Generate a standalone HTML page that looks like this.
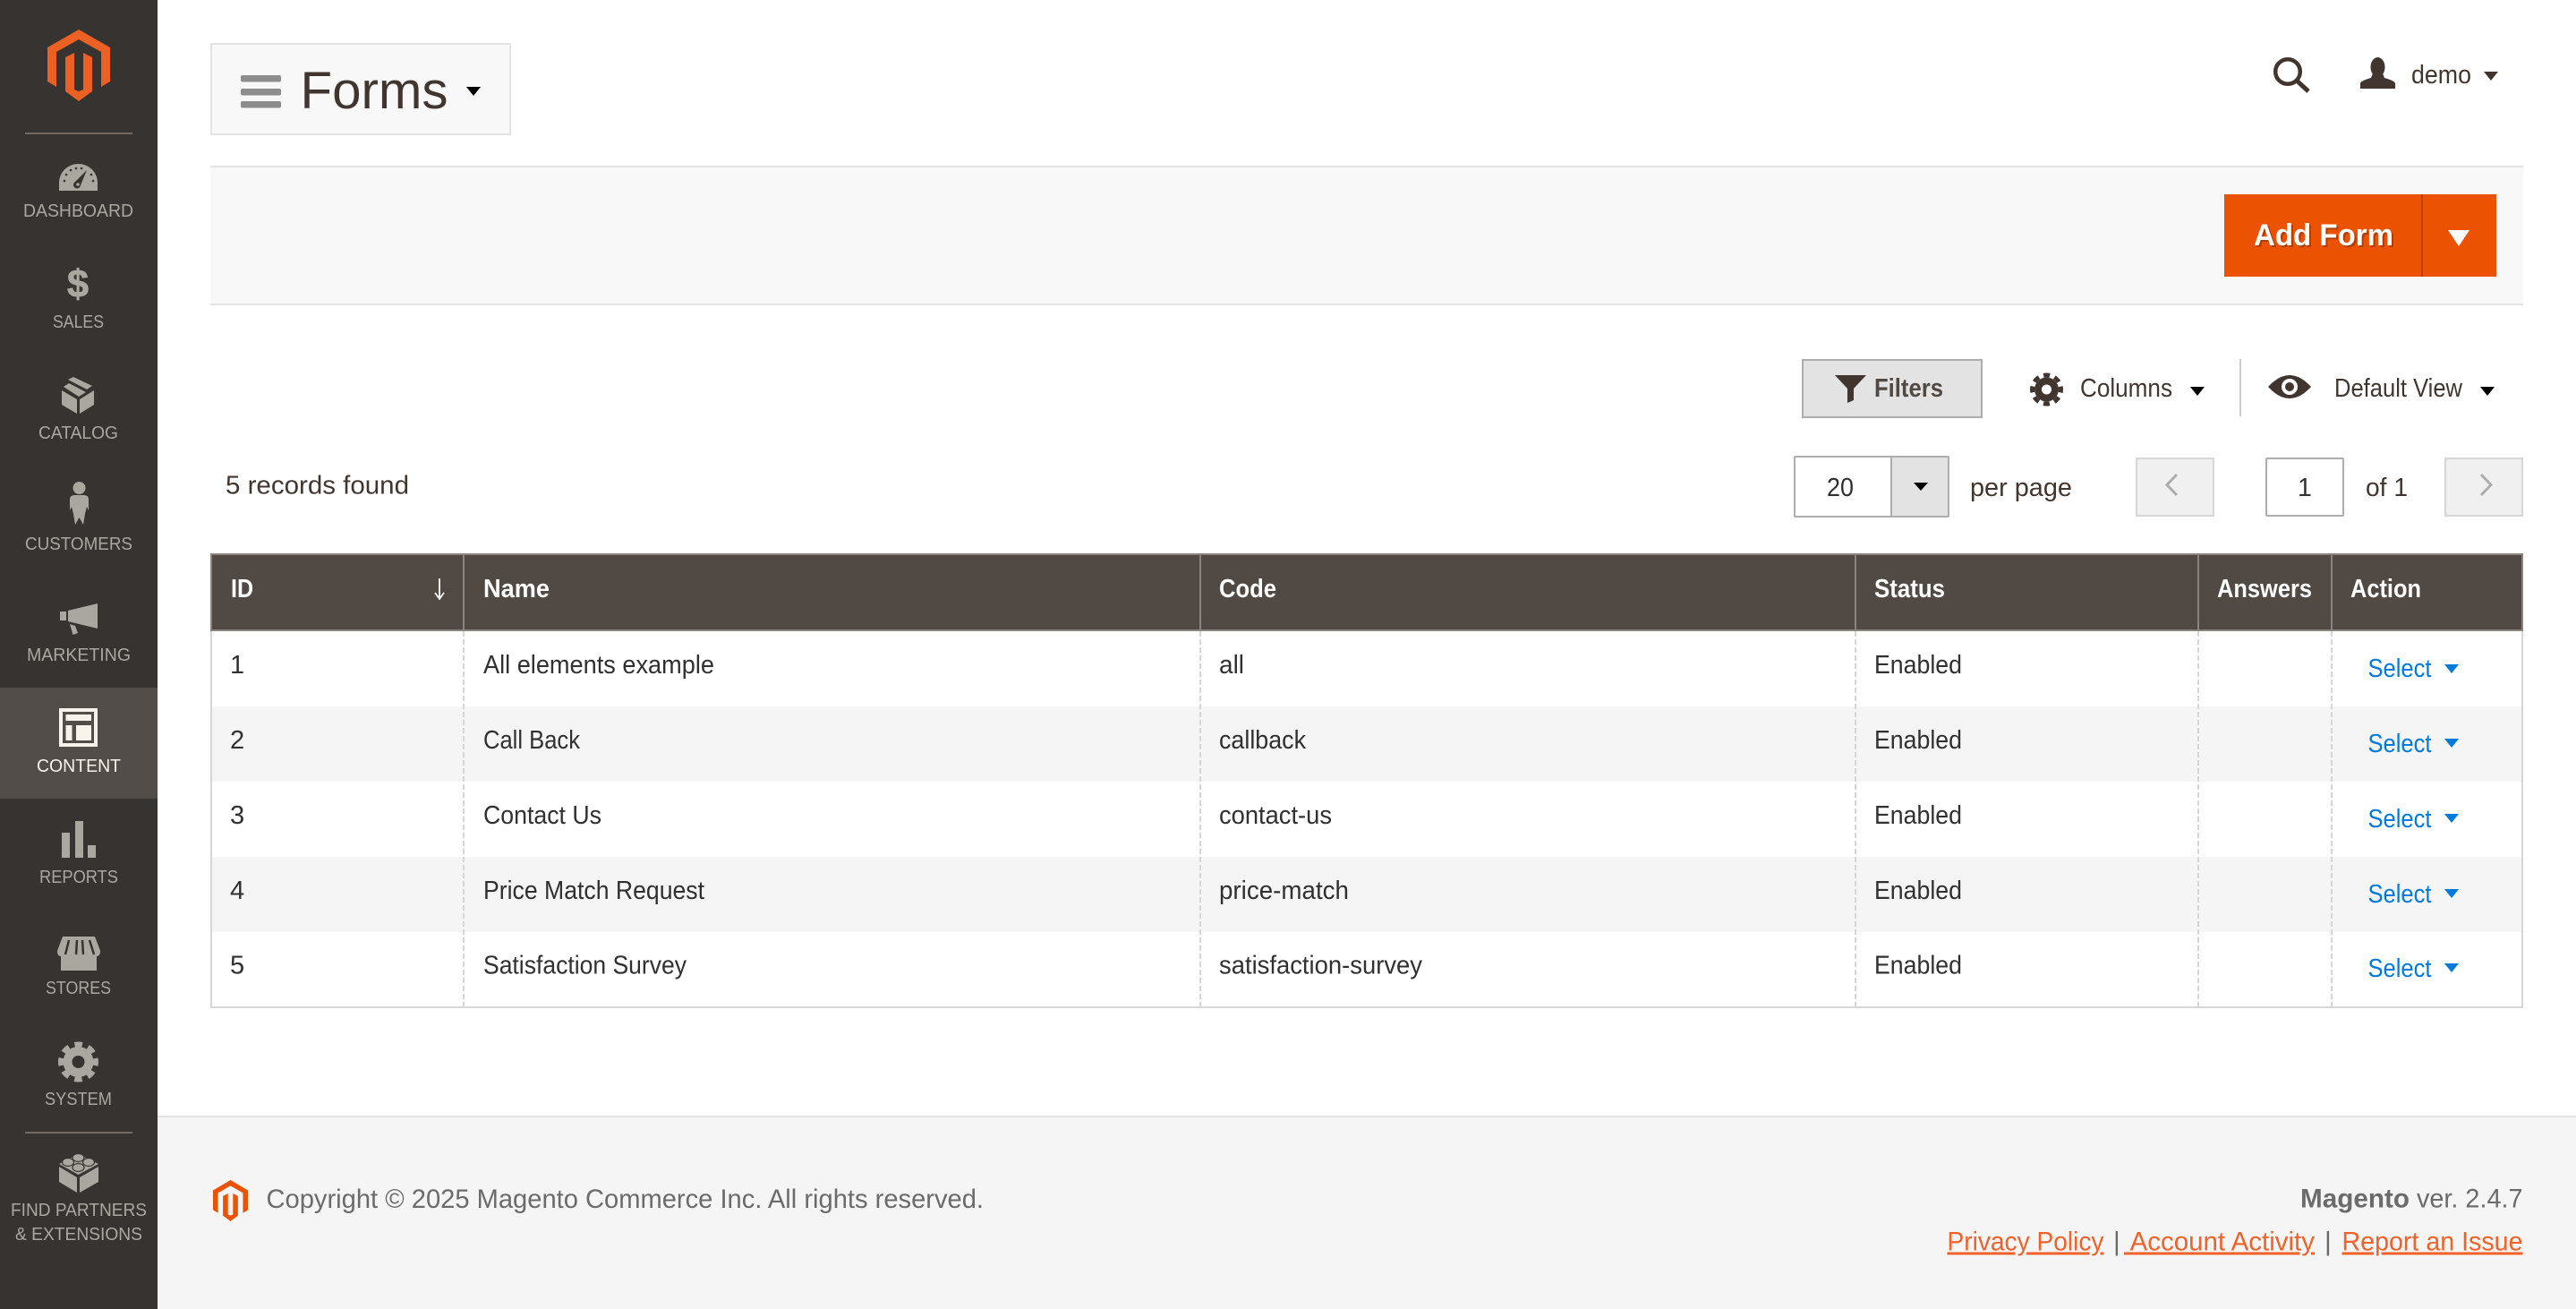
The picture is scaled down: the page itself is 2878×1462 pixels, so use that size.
<!DOCTYPE html>
<html lang="en">
<head>
<meta charset="utf-8">
<title>Forms</title>
<style>
html,body{margin:0;padding:0;background:#fff;width:2878px;height:1462px;overflow:hidden}
svg{display:block}
text{font-family:"Liberation Sans",sans-serif;white-space:pre}
.n{font-size:20.5px;fill:#aaa6a0}
.t{font-size:29px;fill:#303030}
.h{font-size:28.5px;fill:#fff;font-weight:bold}
.d{font-size:29px;fill:#41362f}
.s{font-size:29px;fill:#007bdb}
.f{font-size:30px;fill:#6b6b6b}
.l{font-size:30px;fill:#f1622a;text-decoration:underline}
</style>
</head>
<body>
<svg xmlns="http://www.w3.org/2000/svg" width="2878" height="1462" viewBox="0 0 2878 1462">
<!-- Sidebar -->
<rect x="0" y="0" width="176" height="1462" fill="#373330"/>
<rect x="0" y="768" width="176" height="124" fill="#524d49"/>
<path fill="#ec6024" d="M88 33L123 53V91L113 97V58L88 44L63 58V97L53 91V53ZM73 64L83 59V100L88 102L93 100V59L103 64V102L88 113L73 102Z"/>
<rect x="28" y="148" width="120" height="2" fill="#736963"/>
<rect x="28" y="1264" width="120" height="2" fill="#736963"/>

<path fill="#aaa6a0" d="M66 213V204A21.5 21 0 0 1 109 204V213Z"/>
<path fill="#373330" d="M97 190L90 207A4 4 0 1 1 84 203Z"/>
<circle cx="87" cy="206" r="1.8" fill="#aaa6a0"/>
<g fill="#373330"><circle cx="72" cy="202" r="1.3"/><circle cx="74" cy="195" r="1.3"/><circle cx="79" cy="190" r="1.3"/><circle cx="85" cy="188" r="1.3"/><circle cx="91" cy="188" r="1.3"/><circle cx="102" cy="195" r="1.3"/><circle cx="104" cy="202" r="1.3"/></g>
<text class="n" x="26" y="242" textLength="123" lengthAdjust="spacingAndGlyphs">DASHBOARD</text>

<text x="75" y="332" font-size="44" font-weight="bold" fill="#aaa6a0" stroke="#aaa6a0" stroke-width="0.8" textLength="24" lengthAdjust="spacingAndGlyphs">$</text>
<text class="n" x="59" y="366" textLength="57" lengthAdjust="spacingAndGlyphs">SALES</text>

<path fill="#aaa6a0" d="M69 436L86 446V462L69 452ZM89 446L105 436V452L89 462ZM82 421L103 431L97 435L76 424ZM71 432L77 428L96 438L88 443Z"/>
<text class="n" x="43" y="490" textLength="89" lengthAdjust="spacingAndGlyphs">CATALOG</text>

<circle cx="88.5" cy="545" r="7" fill="#aaa6a0"/>
<path fill="#aaa6a0" d="M83 553H94Q99 553 99 558V570L97 566L95 574L93 586L88.5 578L84 586L82 574L80 566L78 570V558Q78 553 83 553Z"/>
<text class="n" x="28" y="614" textLength="120" lengthAdjust="spacingAndGlyphs">CUSTOMERS</text>

<path fill="#aaa6a0" d="M67 683H74V693H67ZM76 682L109 674V702L76 694ZM78 697L84 699L87 707L81.5 709Z"/>
<text class="n" x="30" y="738" textLength="116" lengthAdjust="spacingAndGlyphs">MARKETING</text>

<rect x="68" y="793" width="39" height="39" fill="none" stroke="#f7f3eb" stroke-width="4"/>
<path fill="#f7f3eb" d="M73.5 798H102V805H73.5ZM73.5 810H80.5V827H73.5ZM85 810H102V827H85Z"/>
<text class="n" x="41" y="862" textLength="94" lengthAdjust="spacingAndGlyphs" style="fill:#f7f3eb">CONTENT</text>

<path fill="#aaa6a0" d="M69 930H78V958H69ZM84 917H93V958H84ZM98 944H107V958H98Z"/>
<text class="n" x="44" y="986" textLength="88" lengthAdjust="spacingAndGlyphs">REPORTS</text>

<rect x="68" y="1062" width="40" height="22" fill="#aaa6a0"/>
<path fill="#aaa6a0" d="M70 1046H106L112 1062Q112 1068 108 1068H68Q64 1068 64 1062Z"/>
<path fill="none" stroke="#373330" stroke-width="2.5" d="M77 1050L73 1066M86 1050L85 1066M92 1050L93 1066M100 1050L105 1066"/>
<text class="n" x="51" y="1110" textLength="73" lengthAdjust="spacingAndGlyphs">STORES</text>

<circle cx="87.5" cy="1186" r="17" fill="#aaa6a0"/>
<circle cx="87.5" cy="1186" r="19.5" fill="none" stroke="#aaa6a0" stroke-width="6" stroke-dasharray="8.5 6.815" stroke-dashoffset="4.25"/>
<circle cx="87.5" cy="1186" r="7" fill="#373330"/>
<text class="n" x="50" y="1234" textLength="75" lengthAdjust="spacingAndGlyphs">SYSTEM</text>

<path fill="#aaa6a0" d="M66 1303L86 1315V1332L66 1320ZM89 1315L110 1303V1320L89 1332ZM66 1300L87.5 1289L110 1300L87.5 1312Z"/>
<g fill="#aaa6a0" stroke="#373330" stroke-width="1.2"><ellipse cx="87.5" cy="1293" rx="6.5" ry="4.5"/><ellipse cx="76" cy="1298" rx="6.5" ry="4.5"/><ellipse cx="99" cy="1298" rx="6.5" ry="4.5"/><ellipse cx="87.5" cy="1304" rx="6.5" ry="4.5"/></g>
<text class="n" x="12" y="1358" textLength="152" lengthAdjust="spacingAndGlyphs">FIND PARTNERS</text>
<text class="n" x="17" y="1385" textLength="142" lengthAdjust="spacingAndGlyphs">&amp; EXTENSIONS</text>

<!-- Page title -->
<rect x="236" y="49" width="334" height="101" fill="#f8f8f8" stroke="#e3e3e3" stroke-width="2"/>
<rect x="269" y="84" width="45" height="7.5" rx="2" fill="#8d8d8d"/>
<rect x="269" y="99" width="45" height="7.5" rx="2" fill="#8d8d8d"/>
<rect x="269" y="113" width="45" height="7.5" rx="2" fill="#8d8d8d"/>
<text x="335.5" y="121" font-size="58" fill="#41362f" textLength="165" lengthAdjust="spacingAndGlyphs">Forms</text>
<polygon points="521,97 537,97 529,107" fill="#000"/>

<!-- Header right -->
<circle cx="2556" cy="80" r="13.8" fill="none" stroke="#41362f" stroke-width="4.5"/>
<path d="M2566 90L2579 102" stroke="#41362f" stroke-width="5" fill="none"/>
<ellipse cx="2656.5" cy="75" rx="8" ry="11" fill="#41362f"/>
<path fill="#41362f" d="M2637 99V93Q2638 90 2649 87L2651 82H2662L2664 87Q2675 90 2676 93V99Z"/>
<text class="d" x="2694" y="93" textLength="67" lengthAdjust="spacingAndGlyphs">demo</text>
<polygon points="2775,80 2791,80 2783,90" fill="#41362f"/>

<!-- Actions bar -->
<rect x="235" y="185" width="2584" height="155" fill="#f8f8f8"/>
<rect x="235" y="185" width="2584" height="2" fill="#e3e3e3"/>
<rect x="235" y="339" width="2584" height="2" fill="#e3e3e3"/>
<rect x="2485" y="217" width="304" height="92" fill="#eb5202"/>
<rect x="2705" y="217" width="2" height="92" fill="#b84002"/>
<text x="2518" y="274" font-size="34.5" font-weight="bold" fill="#fff" textLength="156" lengthAdjust="spacingAndGlyphs" style="filter:drop-shadow(2px 2px 0 rgba(0,0,0,.25))">Add Form</text>
<polygon points="2735,257 2759,257 2747,275" fill="#fff"/>

<!-- Toolbar -->
<rect x="2014" y="402" width="200" height="64" fill="#e3e3e3" stroke="#adadad" stroke-width="2"/>
<path fill="#41362f" d="M2050 419H2085L2071 434V447L2064 450V434Z"/>
<text x="2094" y="443" font-size="28.5" font-weight="bold" fill="#514943" textLength="77" lengthAdjust="spacingAndGlyphs">Filters</text>

<circle cx="2286.5" cy="435" r="13.5" fill="#41362f"/>
<circle cx="2286.5" cy="435" r="16" fill="none" stroke="#41362f" stroke-width="5" stroke-dasharray="7 5.566" stroke-dashoffset="3.5"/>
<circle cx="2286.5" cy="435" r="5.5" fill="#fff"/>
<text class="d" x="2324" y="443" textLength="103" lengthAdjust="spacingAndGlyphs">Columns</text>
<polygon points="2447,432 2463,432 2455,442" fill="#000"/>
<rect x="2502" y="401" width="2" height="64" fill="#ccc"/>
<path fill="#41362f" d="M2534 432Q2558 406 2582 432Q2558 458 2534 432Z"/>
<circle cx="2558" cy="432" r="9" fill="#fff"/>
<circle cx="2558" cy="432" r="5" fill="#41362f"/>
<text class="d" x="2608" y="443" textLength="143" lengthAdjust="spacingAndGlyphs">Default View</text>
<polygon points="2771,432 2787,432 2779,442" fill="#000"/>

<!-- Pager -->
<text class="d" x="252" y="551.5" textLength="205" lengthAdjust="spacingAndGlyphs">5 records found</text>
<rect x="2005" y="510" width="172" height="67" rx="1" fill="#fff" stroke="#adadad" stroke-width="2"/>
<rect x="2113" y="511" width="63" height="65" fill="#e3e3e3"/>
<rect x="2112" y="510" width="2" height="67" fill="#adadad"/>
<text x="2041" y="554" font-size="28.5" fill="#303030" textLength="30" lengthAdjust="spacingAndGlyphs">20</text>
<polygon points="2138,539 2154,539 2146,548" fill="#000"/>
<text class="d" x="2201" y="554" textLength="114" lengthAdjust="spacingAndGlyphs">per page</text>
<rect x="2387" y="512" width="86" height="64" fill="#f0f0f0" stroke="#d6d6d6" stroke-width="2"/>
<path d="M2432 530L2421 541.5L2432 553" fill="none" stroke="#adadad" stroke-width="3"/>
<rect x="2532" y="512" width="86" height="64" rx="1" fill="#fff" stroke="#adadad" stroke-width="2"/>
<text x="2567" y="554" font-size="28.5" fill="#303030">1</text>
<text class="d" x="2643" y="554" textLength="47" lengthAdjust="spacingAndGlyphs">of 1</text>
<rect x="2732" y="512" width="86" height="64" fill="#f0f0f0" stroke="#d6d6d6" stroke-width="2"/>
<path d="M2772 530L2783 541.5L2772 553" fill="none" stroke="#adadad" stroke-width="3"/>

<!-- Table -->
<rect x="236" y="705" width="2582" height="420" fill="#fff"/>
<rect x="237" y="789" width="2580" height="84" fill="#f5f5f5"/>
<rect x="237" y="957" width="2580" height="84" fill="#f5f5f5"/>
<path d="M236 705V1125M2818 705V1125M235 1125H2819" fill="none" stroke="#d6d6d6" stroke-width="2"/>
<g fill="none" stroke="#d6d6d6" stroke-width="2" stroke-dasharray="6 3">
<path d="M518 705V1125"/><path d="M1341 705V1125"/><path d="M2073 705V1125"/><path d="M2456 705V1125"/><path d="M2605 705V1125"/>
</g>
<rect x="236" y="619" width="2582" height="85" fill="#514943" stroke="#8a837f" stroke-width="2"/>
<path d="M518 619V704M1341 619V704M2073 619V704M2456 619V704M2605 619V704" fill="none" stroke="#8a837f" stroke-width="2"/>
<text class="h" x="258" y="667" textLength="25" lengthAdjust="spacingAndGlyphs">ID</text>
<path d="M491 646V668M486 662L491 669L496 662" fill="none" stroke="#fff" stroke-width="1.8"/>
<text class="h" x="540" y="667" textLength="74" lengthAdjust="spacingAndGlyphs">Name</text>
<text class="h" x="1362" y="667" textLength="64" lengthAdjust="spacingAndGlyphs">Code</text>
<text class="h" x="2094" y="667" textLength="79" lengthAdjust="spacingAndGlyphs">Status</text>
<text class="h" x="2477" y="667" textLength="106" lengthAdjust="spacingAndGlyphs">Answers</text>
<text class="h" x="2626" y="667" textLength="79" lengthAdjust="spacingAndGlyphs">Action</text>

<text class="t" x="257" y="752">1</text>
<text class="t" x="540" y="752" textLength="258" lengthAdjust="spacingAndGlyphs">All elements example</text>
<text class="t" x="1362" y="752" textLength="28" lengthAdjust="spacingAndGlyphs">all</text>
<text class="t" x="2094" y="752" textLength="98" lengthAdjust="spacingAndGlyphs">Enabled</text>
<text class="s" x="2645.5" y="756" textLength="71" lengthAdjust="spacingAndGlyphs">Select</text>
<polygon points="2731,742 2747,742 2739,752" fill="#007bdb"/>

<text class="t" x="257" y="836">2</text>
<text class="t" x="540" y="836" textLength="108" lengthAdjust="spacingAndGlyphs">Call Back</text>
<text class="t" x="1362" y="836" textLength="97" lengthAdjust="spacingAndGlyphs">callback</text>
<text class="t" x="2094" y="836" textLength="98" lengthAdjust="spacingAndGlyphs">Enabled</text>
<text class="s" x="2645.5" y="840" textLength="71" lengthAdjust="spacingAndGlyphs">Select</text>
<polygon points="2731,825 2747,825 2739,835" fill="#007bdb"/>

<text class="t" x="257" y="920">3</text>
<text class="t" x="540" y="920" textLength="132" lengthAdjust="spacingAndGlyphs">Contact Us</text>
<text class="t" x="1362" y="920" textLength="126" lengthAdjust="spacingAndGlyphs">contact-us</text>
<text class="t" x="2094" y="920" textLength="98" lengthAdjust="spacingAndGlyphs">Enabled</text>
<text class="s" x="2645.5" y="924" textLength="71" lengthAdjust="spacingAndGlyphs">Select</text>
<polygon points="2731,909 2747,909 2739,919" fill="#007bdb"/>

<text class="t" x="257" y="1004">4</text>
<text class="t" x="540" y="1004" textLength="247" lengthAdjust="spacingAndGlyphs">Price Match Request</text>
<text class="t" x="1362" y="1004" textLength="145" lengthAdjust="spacingAndGlyphs">price-match</text>
<text class="t" x="2094" y="1004" textLength="98" lengthAdjust="spacingAndGlyphs">Enabled</text>
<text class="s" x="2645.5" y="1008" textLength="71" lengthAdjust="spacingAndGlyphs">Select</text>
<polygon points="2731,993 2747,993 2739,1003" fill="#007bdb"/>

<text class="t" x="257" y="1087.5">5</text>
<text class="t" x="540" y="1087.5" textLength="227" lengthAdjust="spacingAndGlyphs">Satisfaction Survey</text>
<text class="t" x="1362" y="1087.5" textLength="227" lengthAdjust="spacingAndGlyphs">satisfaction-survey</text>
<text class="t" x="2094" y="1087.5" textLength="98" lengthAdjust="spacingAndGlyphs">Enabled</text>
<text class="s" x="2645.5" y="1091" textLength="71" lengthAdjust="spacingAndGlyphs">Select</text>
<polygon points="2731,1076 2747,1076 2739,1086" fill="#007bdb"/>

<!-- Footer -->
<rect x="176" y="1246" width="2702" height="216" fill="#f5f5f5"/>
<rect x="176" y="1246" width="2702" height="2" fill="#e3e3e3"/>
<path fill="#eb5202" transform="translate(238 1318) scale(0.557 0.575) translate(-53 -33)" d="M88 33L123 53V91L113 97V58L88 44L63 58V97L53 91V53ZM73 64L83 59V100L88 102L93 100V59L103 64V102L88 113L73 102Z"/>
<text class="f" x="297.5" y="1349" textLength="801.5" lengthAdjust="spacingAndGlyphs">Copyright © 2025 Magento Commerce Inc. All rights reserved.</text>
<text class="f" x="2570" y="1348.5" font-weight="bold" textLength="122" lengthAdjust="spacingAndGlyphs">Magento</text>
<text class="f" x="2700" y="1348.5" textLength="118.5" lengthAdjust="spacingAndGlyphs">ver. 2.4.7</text>
<text class="l" x="2175.5" y="1396.5" textLength="175" lengthAdjust="spacingAndGlyphs">Privacy Policy</text>
<text class="f" x="2361" y="1396.5">|</text>
<text class="l" x="2373" y="1396.5" textLength="213" lengthAdjust="spacingAndGlyphs"> Account Activity</text>
<text class="f" x="2597" y="1396.5">|</text>
<text class="l" x="2616.5" y="1396.5" textLength="202" lengthAdjust="spacingAndGlyphs">Report an Issue</text>
</svg>
</body>
</html>
